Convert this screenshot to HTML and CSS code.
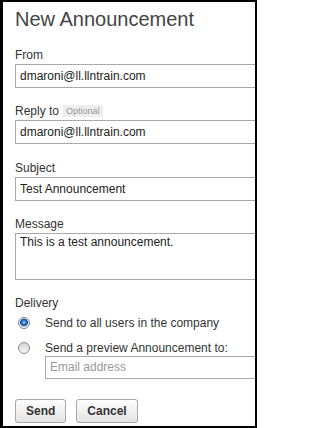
FILE: index.html
```html
<!DOCTYPE html>
<html lang="en">
<head>
<meta charset="utf-8">
<title>New Announcement</title>
<link rel="stylesheet" href="styles.css">
</head>
<body>
<div class="frame">
  <form class="form">
    <h1 class="title">New Announcement</h1>
    <div class="field">
      <label class="label">From</label>
      <input class="input" type="text" value="dmaroni@ll.llntrain.com">
    </div>
    <div class="field">
      <label class="label">Reply to <span class="badge">Optional</span></label>
      <input class="input" type="text" value="dmaroni@ll.llntrain.com">
    </div>
    <div class="field">
      <label class="label">Subject</label>
      <input class="input" type="text" value="Test Announcement">
    </div>
    <div class="field">
      <label class="label">Message</label>
      <textarea class="input textarea">This is a test announcement.</textarea>
    </div>
    <div class="field delivery">
      <span class="label">Delivery</span>
      <div class="options">
        <label class="option"><input class="radio" type="radio" name="d" checked> Send to all users in the company</label>
        <label class="option option-2"><input class="radio" type="radio" name="d"> Send a preview Announcement to:</label>
        <input class="input email" type="text" placeholder="Email address">
      </div>
    </div>
    <div class="actions">
      <button class="btn" type="button">Send</button>
      <button class="btn" type="button">Cancel</button>
    </div>
  </form>
</div>
</body>
</html>
```
FILE: styles.css
```css
* { box-sizing: border-box; }
body {
  margin: 0;
  font-family: "Liberation Sans", Arial, sans-serif;
  background: #fff;
}
.frame {
  width: 257px;
  height: 428px;
  border: 2px solid #000;
  border-left-width: 3px;
  overflow: hidden;
  background: #fff;
}
.form {
  display: flex;
  flex-direction: column;
  padding: 5px 0 0 12px;
  margin: 0;
}
.title {
  margin: 0;
  font-size: 20px;
  line-height: 24px;
  font-weight: normal;
  color: #444;
}
.field {
  display: flex;
  flex-direction: column;
  gap: 2px;
  margin-top: 16.5px;
}
.label {
  display: flex;
  align-items: center;
  gap: 4px;
  font-size: 12px;
  line-height: 14px;
  color: #333;
}
.badge {
  font-size: 9px;
  line-height: 12px;
  padding: 0 3px;
  background: #eee;
  color: #999;
}
.input {
  width: 250px;
  height: 24px;
  margin: 0;
  padding: 0 4px;
  border: 1px solid #aaa;
  border-radius: 0;
  font-family: "Liberation Sans", Arial, sans-serif;
  font-size: 12px;
  color: #222;
  background: #fff;
  outline: none;
}
.textarea {
  height: 46.5px;
  padding: 1px 4px;
  line-height: 14px;
  resize: none;
  overflow: hidden;
}
.delivery { margin-top: 16px; }
.options {
  display: flex;
  flex-direction: column;
  margin-top: 4px;
}
.option {
  display: flex;
  align-items: center;
  gap: 15px;
  padding-left: 3px;
  font-size: 12px;
  line-height: 14px;
  color: #333;
}
.option-2 { margin-top: 11.5px; }
.radio {
  appearance: none;
  -webkit-appearance: none;
  width: 12px;
  height: 12px;
  margin: 0;
  border: 1px solid #8c8c8c;
  border-radius: 50%;
  background: linear-gradient(#d4d4d4, #f6f6f6);
}
.radio:checked {
  border-color: #7a8796;
  background: radial-gradient(circle at 50% 45%, #a9dcff 0, #3b8de0 1.5px, #1b5fae 3px, #1f4a7c 3.6px, #e9eef3 4.2px, #fafafa 6px);
}
.email {
  width: 220px;
  height: 23px;
  margin-left: 30px;
  margin-top: 0.5px;
}
.email::placeholder { color: #999; }
.actions {
  display: flex;
  gap: 10px;
  margin-top: 20px;
}
.btn {
  height: 24px;
  padding: 0 10px;
  border: 1px solid #a8a8a8;
  border-radius: 3px;
  background: linear-gradient(#fdfdfd, #e3e3e3);
  font-family: "Liberation Sans", Arial, sans-serif;
  font-size: 12px;
  font-weight: bold;
  color: #333;
}
```
